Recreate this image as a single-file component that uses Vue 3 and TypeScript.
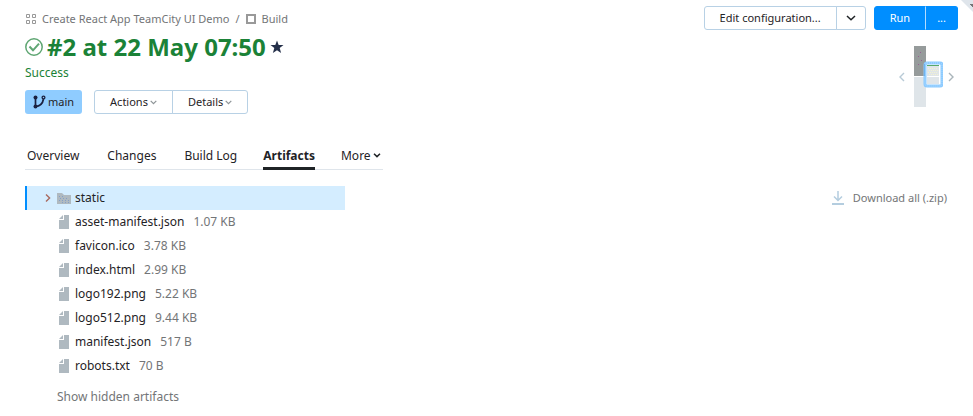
<script setup lang="ts">
import { ref } from 'vue'

interface Artifact {
  name: string
  size: string
}

const tabs: string[] = ['Overview', 'Changes', 'Build Log', 'Artifacts']
const activeTab = ref<string>('Artifacts')

const files: Artifact[] = [
  { name: 'asset-manifest.json', size: '1.07 KB' },
  { name: 'favicon.ico', size: '3.78 KB' },
  { name: 'index.html', size: '2.99 KB' },
  { name: 'logo192.png', size: '5.22 KB' },
  { name: 'logo512.png', size: '9.44 KB' },
  { name: 'manifest.json', size: '517 B' },
  { name: 'robots.txt', size: '70 B' },
]
</script>

<template>
  <div class="page">
    <svg class="corner" width="12" height="12" viewBox="0 0 12 12" aria-hidden="true">
      <path d="M0 0H12V12Z" fill="#dfe5eb" />
      <path d="M9 4h3v3h-1v-1h-1v-1h-1z" fill="#737577" />
    </svg>

    <header class="header">
      <div class="summary">
        <nav class="crumbs" aria-label="Breadcrumb">
          <svg width="11" height="11" viewBox="0 0 11 11" fill="none" stroke="#999" aria-hidden="true">
            <path d="M1.500 .5h3v3h-3zM7.500 .5h3v3h-3zM1.500 6.500h3v3h-3zM7.500 6.500h3v3h-3z" />
          </svg>
          <a href="#">Create React App TeamCity UI Demo</a>
          <span>/</span>
          <svg width="10" height="10" viewBox="0 0 10 10" fill="none" stroke="#999" stroke-width="2" aria-hidden="true">
            <path d="M1 1h8v8H1z" />
          </svg>
          <a href="#">Build</a>
        </nav>
        <div class="title-row">
          <svg width="18" height="18" viewBox="0 0 18 18" fill="none" stroke="#5fa673" aria-hidden="true">
            <circle cx="9" cy="9" r="8.200" stroke-width="1.500" />
            <path d="M4.500 8.500l3.500 3.800 6-6.600" stroke-width="2" />
          </svg>
          <h1>#2 at 22 May 07:50</h1>
          <svg width="14" height="14" viewBox="0 0 14 14" fill="#25304a" aria-hidden="true">
            <path d="M7 .5l1.700 4.500h4.800l-3.800 3 1.400 5L7 10.200 2.900 13l1.400-5L.5 5h4.800z" />
          </svg>
        </div>
        <p class="status">Success</p>
        <div class="actions">
          <button class="branch" type="button">
            <svg width="13" height="14" viewBox="0 0 13 14" fill="none" stroke="#1a2140" aria-hidden="true">
              <path d="M2.500 2v10M2.500 11.500C7 11.200 9.800 8 10.500 4" stroke-width="1.700" />
              <circle cx="2.500" cy="2.500" r="2" fill="#1a2140" stroke="none" />
              <circle cx="2.500" cy="11.500" r="2" fill="#1a2140" stroke="none" />
              <circle cx="10.500" cy="2.500" r="1.400" stroke-width="1.300" />
            </svg>
            <span>main</span>
          </button>
          <div class="group">
            <button type="button">
              Actions
              <svg width="7" height="5" viewBox="0 0 7 5" fill="none" stroke="#8d9497" aria-hidden="true"><path d="M.7 .8l2.800 2.800L6.300 .8" stroke-width="1.200" /></svg>
            </button>
            <button type="button">
              Details
              <svg width="7" height="5" viewBox="0 0 7 5" fill="none" stroke="#8d9497" aria-hidden="true"><path d="M.7 .8l2.800 2.800L6.300 .8" stroke-width="1.200" /></svg>
            </button>
          </div>
        </div>
      </div>

      <div class="side">
        <div class="commands">
          <div class="group">
            <button type="button">Edit configuration...</button>
            <button class="caret" type="button" aria-label="More configuration options">
              <svg width="10" height="6" viewBox="0 0 10 6" fill="none" stroke="#1f2326" aria-hidden="true"><path d="M1 1l4 3.800L9 1" stroke-width="1.500" /></svg>
            </button>
          </div>
          <div class="group primary">
            <button type="button">Run</button>
            <button class="more-run" type="button">...</button>
          </div>
        </div>
        <div class="minimap">
          <button type="button" aria-label="Previous">
            <svg width="6" height="10" viewBox="0 0 6 10" fill="none" stroke="#b8cad6" aria-hidden="true"><path d="M5 1L1 5l4 4" stroke-width="1.400" /></svg>
          </button>
          <svg width="29" height="61" viewBox="0 0 29 61" aria-label="Build chain" role="img">
            <path d="M0 0h12v30H0z" fill="#969b9b" />
            <path d="M0 31h12v30H0z" fill="#dfe5e9" />
            <path d="M6 6h1v1H6zM4 10h1v1H4zM7 14h1v1H7zM4 18h1v1H4z" fill="#985f91" />
            <rect x="11" y="17" width="17" height="23" rx="2" fill="#fff" stroke="#8acaff" stroke-width="3" />
            <path d="M10.500 18v12" stroke="#5aa7ea" />
            <rect x="11" y="17" width="17" height="23" rx="2" fill="none" stroke="#b4dcff" stroke-dasharray="1 1" />
            <path d="M13 19h12v1H13z" fill="#59a869" />
            <path d="M13 20h12v10H13zM13 31h12v7H13z" fill="#dfe5e9" />
            <path d="M14 22.500h10M15 24.500h9M14 26.500h10M15 28.500h9" stroke="#f5f3cf" stroke-dasharray="1 1" />
          </svg>
          <button type="button" aria-label="Next">
            <svg width="6" height="10" viewBox="0 0 6 10" fill="none" stroke="#a9b4ba" aria-hidden="true"><path d="M1 1l4 4-4 4" stroke-width="1.400" /></svg>
          </button>
        </div>
      </div>
    </header>

    <nav class="tabs" aria-label="Build sections">
      <button
        v-for="tab in tabs"
        :key="tab"
        type="button"
        :class="{ active: tab === activeTab }"
        @click="activeTab = tab"
      >{{ tab }}</button>
      <button type="button">
        More
        <svg width="8" height="5" viewBox="0 0 8 5" fill="none" stroke="#1f2326" aria-hidden="true"><path d="M1 .8l3 2.800L7 .8" stroke-width="1.500" /></svg>
      </button>
    </nav>

    <main class="content">
      <div class="tree">
        <ul>
          <li class="row folder">
            <svg class="expand" width="6" height="8" viewBox="0 0 6 8" fill="none" stroke="#a8695f" aria-hidden="true"><path d="M1 .5L4.600 4 1 7.500" stroke-width="1.400" /></svg>
            <svg class="icon" width="14" height="12" viewBox="0 0 14 12" aria-hidden="true">
              <path d="M0 1h5l2 2h7v9H0z" fill="#afb9c0" />
              <path d="M2 4.500h4M3 6.500h9M2 8.500h10M5 10.500h7" stroke="#839fc8" stroke-dasharray="1 2" />
            </svg>
            <a href="#">static</a>
          </li>
          <li v-for="file in files" :key="file.name" class="row">
            <svg class="icon" width="14" height="14" viewBox="0 0 14 14" fill="#afb9c0" aria-hidden="true">
              <path d="M7 0h5v14H2V5h5zM6 0v4H2z" />
            </svg>
            <a href="#">{{ file.name }}</a>
            <span class="size">{{ file.size }}</span>
          </li>
        </ul>
        <button class="hidden-toggle" type="button">Show hidden artifacts</button>
      </div>
      <a class="download" href="#">
        <svg width="12" height="14" viewBox="0 0 12 14" fill="none" stroke="#b4cddf" aria-hidden="true">
          <path d="M6 0v9M2 5.500l4 4 4-4" stroke-width="1.500" />
          <path d="M0 13h12" stroke-width="2" />
        </svg>
        <span>Download all (.zip)</span>
      </a>
    </main>
  </div>
</template>

<style>
body {
  margin: 0;
  background: #fff;
}
</style>

<style scoped>
.page {
  position: relative;
  box-sizing: border-box;
  padding: 6px 15px 0 25px;
  font: 12px/24px "Noto Sans", "Open Sans", sans-serif;
  color: #1f2326;
}
.corner {
  position: absolute;
  top: 0;
  right: 0;
}
button {
  margin: 0;
  padding: 0;
  border: 0;
  background: none;
  color: inherit;
  font: inherit;
  cursor: pointer;
}
a {
  color: inherit;
  text-decoration: none;
}
svg {
  display: block;
  flex: none;
}
.header {
  display: flex;
  justify-content: space-between;
}
.crumbs {
  display: flex;
  align-items: center;
  gap: 6px;
  height: 26px;
  font-size: 11px;
  color: #737577;
}
.title-row {
  display: flex;
  align-items: center;
  gap: 4px;
  height: 30px;
}
h1 {
  margin: 0;
  font-size: 24px;
  line-height: 30px;
  font-weight: 700;
  color: #1b8237;
}
.status {
  margin: 0;
  line-height: 22px;
  color: #1b8237;
}
.actions {
  display: flex;
  gap: 12px;
  margin-top: 6px;
}
.branch {
  display: flex;
  align-items: center;
  gap: 2px;
  height: 24px;
  padding: 0 8px;
  border-radius: 3px;
  background: #8fccff;
  font-size: 11px;
}
.group {
  display: flex;
}
.group button {
  display: flex;
  align-items: center;
  gap: 2px;
  box-sizing: border-box;
  height: 24px;
  padding: 0 15px;
  border: 1px solid #b8d1e5;
  font-size: 11px;
  line-height: 22px;
}
.group button + button {
  margin-left: -1px;
}
.group button:first-child {
  border-radius: 3px 0 0 3px;
}
.group button:last-child {
  border-radius: 0 3px 3px 0;
}
.group .caret {
  padding: 0 9px;
}
.primary button {
  border-color: #008eff;
  background: #008eff;
  color: #fff;
}
.primary .more-run {
  padding: 0 11px;
  border-left-color: #b3dcff;
}
.side {
  display: flex;
  flex-direction: column;
  align-items: flex-end;
}
.commands {
  display: flex;
  gap: 8px;
}
.minimap {
  display: flex;
  align-items: center;
  gap: 9px;
  margin: 16px 4px 0 0;
}
.minimap svg + button {
  margin-left: -4px;
}
.tabs {
  display: flex;
  width: fit-content;
  gap: 24px;
  margin-top: 30px;
  box-shadow: inset 0 -1px #dfe5eb;
}
.tabs button {
  display: flex;
  align-items: center;
  gap: 2px;
  box-sizing: border-box;
  height: 26px;
  padding: 0 2px;
  border-bottom: 3px solid transparent;
  line-height: 20px;
}
.tabs .active {
  padding: 0;
  border-bottom-color: #1f2326;
  font-weight: 700;
}
.content {
  display: flex;
  justify-content: space-between;
  align-items: flex-start;
  margin-top: 16px;
}
.tree {
  flex: 0 1 320px;
}
ul {
  margin: 0;
  padding: 0;
  list-style: none;
}
.row {
  display: flex;
  align-items: center;
  height: 24px;
  padding-left: 32px;
}
.folder {
  padding-left: 18px;
  border-left: 2px solid #008eff;
  background: #d4edff;
}
.expand {
  margin-right: 6px;
}
.icon {
  margin-right: 4px;
}
.size {
  margin-left: 9px;
  color: #737577;
}
.hidden-toggle {
  margin: 7px 0 0 32px;
  color: #737577;
}
.download {
  display: flex;
  align-items: center;
  gap: 9px;
  margin-right: 11px;
  font-size: 11px;
  color: #737577;
}
</style>
